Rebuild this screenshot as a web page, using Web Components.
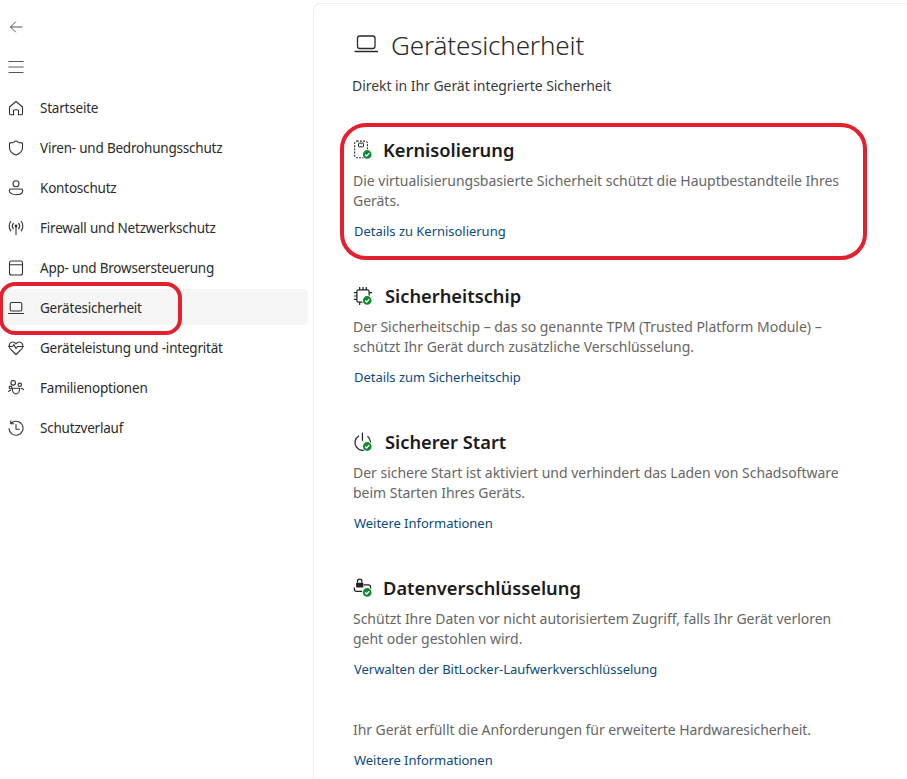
<!DOCTYPE html>
<html lang="de"><head><meta charset="utf-8"><title>Gerätesicherheit</title>
<style>
html,body{margin:0;padding:0;height:100%;background:#fff;overflow:hidden}
body{font-family:"Noto Sans","Open Sans",sans-serif;color:#1b1b1b}
</style></head><body>
<sec-app>
  <sec-sidebar slot="side">
    <nav-item icon="home">Startseite</nav-item>
    <nav-item icon="shield">Viren- und Bedrohungsschutz</nav-item>
    <nav-item icon="person">Kontoschutz</nav-item>
    <nav-item icon="antenna">Firewall und Netzwerkschutz</nav-item>
    <nav-item icon="window">App- und Browsersteuerung</nav-item>
    <nav-item icon="laptop" selected>Gerätesicherheit</nav-item>
    <nav-item icon="heart">Geräteleistung und -integrität</nav-item>
    <nav-item icon="family">Familienoptionen</nav-item>
    <nav-item icon="history">Schutzverlauf</nav-item>
  </sec-sidebar>
  <sec-main slot="main">
    <page-head title-text="Gerätesicherheit">Direkt in Ihr Gerät integrierte Sicherheit</page-head>
    <sec-section icon="core" heading="Kernisolierung" link="Details zu Kernisolierung">Die virtualisierungsbasierte Sicherheit schützt die Hauptbestandteile Ihres Geräts.</sec-section>
    <sec-section icon="chip" wide heading="Sicherheitschip" link="Details zum Sicherheitschip">Der Sicherheitschip – das so genannte TPM (Trusted Platform Module) – schützt Ihr Gerät durch zusätzliche Verschlüsselung.</sec-section>
    <sec-section icon="power" wide heading="Sicherer Start" link="Weitere Informationen">Der sichere Start ist aktiviert und verhindert das Laden von Schadsoftware beim Starten Ihres Geräts.</sec-section>
    <sec-section icon="drive" heading="Datenverschlüsselung" link="Verwalten der BitLocker-Laufwerkverschlüsselung">Schützt Ihre Daten vor nicht autorisiertem Zugriff, falls Ihr Gerät verloren geht oder gestohlen wird.</sec-section>
    <sec-foot link="Weitere Informationen">Ihr Gerät erfüllt die Anforderungen für erweiterte Hardwaresicherheit.</sec-foot>
  </sec-main>
  <red-mark style="left:340px;top:123px;width:527px;height:137px;--r:26px"></red-mark>
  <red-mark style="left:-1px;top:282px;width:183px;height:53px;--r:16px"></red-mark>
</sec-app>
<script>
const S='fill="none" stroke="currentColor" stroke-width="1.1" stroke-linecap="round" stroke-linejoin="round"';
const ICONS={
 home:`<path ${S} d="M1.500 7 8 1.500 14.500 7v6.500a1.300 1.300 0 0 1-1.300 1.300H10.500V11a1.300 1.300 0 0 0-1.300-1.300H6.800A1.300 1.300 0 0 0 5.500 11v3.800H2.800a1.300 1.300 0 0 1-1.300-1.300Z"/>`,
 shield:`<path ${S} d="M8 .8c1.800 1.500 3.900 2.200 6.500 2.300v4.700c0 3.600-2.200 5.900-6.500 7.300-4.300-1.400-6.500-3.700-6.500-7.300V3.100C4.100 3 6.200 2.300 8 .8Z"/>`,
 person:`<circle ${S} cx="8" cy="3.700" r="3"/><path ${S} d="M3 9h10a1.700 1.700 0 0 1 1.700 1.700c0 2.500-3 4-6.700 4s-6.700-1.500-6.700-4A1.700 1.700 0 0 1 3 9Z"/>`,
 antenna:`<circle cx="8" cy="6" r="1.400" fill="currentColor"/><path ${S} d="M8 7v7.500M5.300 8.800c-1.200-1.600-1.200-3.900 0-5.500M10.700 3.300c1.200 1.600 1.200 3.900 0 5.500M2.800 10.800C.6 8.300.6 3.800 2.800 1.300M13.200 1.300c2.200 2.500 2.200 7 0 9.500"/>`,
 window:`<rect ${S} x="1.500" y="1" width="13" height="14" rx="2"/><path ${S} d="M1.500 4.800h13"/>`,
 laptop:`<rect ${S} x="2.200" y="2.500" width="11.600" height="8.500" rx="1.500"/><path ${S} d="M.5 13.500h15"/>`,
 heart:`<path ${S} d="M2.200 8.800C.3 6.600.8 2.500 4.300 2c1.600-.2 2.800.6 3.700 1.800.9-1.200 2.100-2 3.700-1.800 3.500.5 4 4.600 2.100 6.800L8 14.500ZM.6 6.500h3.800l1.500-1.800 2.100 3.800 1.600-2h5.800"/>`,
 family:`<circle ${S} cx="5.200" cy="2.800" r="2.300"/><circle ${S} cx="11.800" cy="4.800" r="1.700"/><circle ${S} cx="2.500" cy="7.500" r="1.400"/><path ${S} d="M4.400 8.200h7.200c0 2.200-.2 3.300-1 4.300-.8.900-1.600 1.400-2.600 1.400s-1.900-.5-2.600-1.400c-.8-1-1-2.100-1-4.300ZM.5 11.500c.4-.7 1.200-1 2.200-1M15.500 9.800c-.4-.8-1.300-1.400-2.300-1.400"/>`,
 history:`<path ${S} d="M3 3.300A7 7 0 1 1 1 8.500M2.700.8v3h3M8 4.500v4.700h3.400"/>`
};
const bigLaptop=`<rect fill="none" stroke="currentColor" stroke-width="1.300" x="3.500" y="3" width="17.500" height="12.500" rx="2.200"/><path fill="none" stroke="currentColor" stroke-width="1.400" stroke-linecap="round" d="M1 18.500h22.500"/>`;
const BADGE=`<circle cx="12.800" cy="13" r="4.600" fill="#fff"/><circle cx="12.800" cy="13" r="3.900" fill="#0f8a2f"/><path d="m10.900 13 1.400 1.400 2.400-2.600" fill="none" stroke="#fff" stroke-width="1.100"/>`;
const SEC={
 core:`<rect x="1.500" y="1" width="11.500" height="15" rx="2" fill="none" stroke="currentColor" stroke-dasharray="1.700 1.100"/><rect x="5" y="2.800" width="4.500" height="3.400" rx=".6" fill="none" stroke="currentColor" stroke-width=".9"/>`,
 chip:`<rect x="3.500" y="3.500" width="11" height="11" rx="1.500" fill="none" stroke="currentColor" stroke-width="1.100"/><path d="M6 .8v2.700M9 .8v2.700M12 .8v2.700M6 14.500v2.700M.8 6h2.700M.8 9h2.700M.8 12h2.700M14.500 6h2.700" stroke="currentColor" stroke-width="1.100" fill="none"/>`,
 power:`<path d="M8.500 .5v7.500" stroke="currentColor" stroke-width="1.100" fill="none"/><path d="M5.500 3.300a7 7 0 1 0 7.500 .6" stroke="currentColor" stroke-width="1.100" fill="none"/>`,
 drive:`<path d="M4 4.300V3a2 2 0 0 1 4 0v1.300" fill="none" stroke="currentColor" stroke-width="1.100"/><rect x="2.800" y="4.200" width="6.500" height="4.300" rx=".7" fill="currentColor"/><path d="M9.500 6.200h4.300a2 2 0 0 1 2 2v1.600M1.200 8.500v1.500a2 2 0 0 0 2 2h5.300" fill="none" stroke="currentColor" stroke-width="1.100"/>`
};
function tpl(css,html){const t=document.createElement('template');t.innerHTML=`<style>${css}</style>${html}`;return t;}
function mount(el,t){el.attachShadow({mode:'open'}).appendChild(t.content.cloneNode(true));return el.shadowRoot;}

const appT=tpl(`:host{display:flex;position:relative;width:907px;height:779px;overflow:hidden}`,`<slot name="side"></slot><slot name="main"></slot><slot></slot>`);
customElements.define('sec-app',class extends HTMLElement{constructor(){super();mount(this,appT);}});

const sideT=tpl(`:host{display:block;box-sizing:border-box;width:313px;flex:none;padding:7px 5px 0 0}
.btn{height:40px;display:flex;align-items:center;padding-left:8px;color:#555}
svg{display:block}
.nav{margin-top:0.5px}`,
`<div class="btn"><svg width="16" height="16" viewBox="0 0 16 16" fill="none" stroke="currentColor" stroke-linecap="round" stroke-linejoin="round"><path d="M14 8H2.500M7.500 3 2.500 8l5 5"/></svg></div>
<div class="btn"><svg width="16" height="16" viewBox="0 0 16 16" fill="none" stroke="currentColor"><path d="M.5 2.500h15M.5 8h15M.5 13.500h15"/></svg></div>
<div class="nav"><slot></slot></div>`);
customElements.define('sec-sidebar',class extends HTMLElement{constructor(){super();mount(this,sideT);}});

const navT=tpl(`:host{display:block;box-sizing:border-box;height:40px;padding-top:1.500px;font-size:13.500px;letter-spacing:-.21px;color:#2b2b2b}
.row{display:flex;align-items:center;width:100%;height:36px;border-radius:5px;padding:2px 0 0 8px;box-sizing:border-box}
:host([selected]) .row{background:#f5f5f5}
svg{width:16px;height:16px;flex:none;margin-right:16px;color:#333;display:block}`,
`<div class="row"><svg viewBox="0 0 16 16"></svg><slot></slot></div>`);
customElements.define('nav-item',class extends HTMLElement{constructor(){super();const r=mount(this,navT);r.querySelector('svg').innerHTML=ICONS[this.getAttribute('icon')]||'';}});

const mainT=tpl(`:host{display:block;flex:1;box-sizing:border-box;margin-top:3px;background:#fff;border:1px solid #eeeeee;border-right:0;border-bottom:0;border-top-left-radius:8px;padding:0 0 0 39px}`,`<slot></slot>`);
customElements.define('sec-main',class extends HTMLElement{constructor(){super();mount(this,mainT);}});

const headT=tpl(`:host{display:block;height:131px}
.t{display:flex;align-items:center;height:40px;padding-top:21px;padding-left:1px;color:#2a2a2a}
svg{width:24px;height:24px;margin-right:13px;flex:none}
h1{margin:0;font-size:26px;font-weight:300;letter-spacing:-.15px;line-height:40px}
p{margin:11px 0 0 -1px;font-size:14px;line-height:20px;color:#3a3a3a;letter-spacing:-.05px}`,
`<div class="t"><svg viewBox="0 0 24 24"></svg><h1></h1></div><p><slot></slot></p>`);
customElements.define('page-head',class extends HTMLElement{constructor(){super();const r=mount(this,headT);r.querySelector('svg').innerHTML=bigLaptop;r.querySelector('h1').textContent=this.getAttribute('title-text');}});

const secT=tpl(`:host{display:block;height:146px;width:490px}
.h{display:flex;align-items:center;height:30px;color:#222}
svg{width:20px;height:20px;flex:none;margin-right:10px;color:#222}
:host([wide]) svg{margin-right:12px}
h2{margin:0;font-size:18.300px;font-weight:600;line-height:30px;color:#1b1b1b}
p{margin:6px 0 0;font-size:14px;line-height:20px;color:#666;letter-spacing:-.02px}
a{display:block;margin:10px 0 0 1px;font-size:13px;line-height:20px;color:#0b4a80;text-decoration:none;letter-spacing:-.03px}`,
`<div class="h"><svg viewBox="0 0 18 18"></svg><h2></h2></div><p><slot></slot></p><a href="#"></a>`);
customElements.define('sec-section',class extends HTMLElement{constructor(){super();const r=mount(this,secT);r.querySelector('svg').innerHTML=(SEC[this.getAttribute('icon')]||'')+BADGE;r.querySelector('h2').textContent=this.getAttribute('heading');r.querySelector('a').textContent=this.getAttribute('link');}});

const footT=tpl(`:host{display:block;margin-top:1px}
p{margin:0;font-size:14px;line-height:20px;color:#666;letter-spacing:-.055px}
a{display:block;margin:10px 0 0 1px;font-size:13px;line-height:20px;color:#0b4a80;text-decoration:none;letter-spacing:-.03px}`,
`<p><slot></slot></p><a href="#"></a>`);
customElements.define('sec-foot',class extends HTMLElement{constructor(){super();const r=mount(this,footT);r.querySelector('a').textContent=this.getAttribute('link');}});

const redT=tpl(`:host{position:absolute;display:block;box-sizing:border-box;border:4.500px solid #e3202e;border-radius:var(--r);pointer-events:none}`,``);
customElements.define('red-mark',class extends HTMLElement{constructor(){super();mount(this,redT);}});
</script>
</body></html>
